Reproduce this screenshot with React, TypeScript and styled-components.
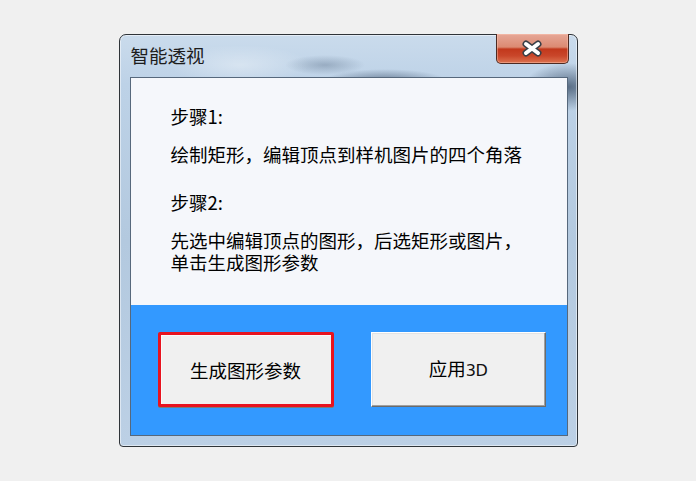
import React from "react";
import styled, { createGlobalStyle } from "styled-components";

const GlobalStyle = createGlobalStyle`
  html, body { margin: 0; padding: 0; background: #f0f0f0; }
  body { font-family: "Noto Sans CJK SC", "Noto Sans", sans-serif; }
`;

const Page = styled.div`
  width: 696px;
  height: 481px;
  display: flex;
  align-items: center;
  justify-content: center;
`;

const Window = styled.div`
  width: 459px;
  height: 413px;
  box-sizing: border-box;
  border: 1px solid #2f3439;
  border-radius: 7px 7px 4px 4px;
  display: flex;
  flex-direction: column;
  box-shadow: inset 0 0 0 1px rgba(255, 255, 255, 0.5);
  background:
    radial-gradient(ellipse 62px 12px at 265px 46px, rgba(75, 95, 120, 0.7), transparent),
    radial-gradient(ellipse 40px 10px at 205px 30px, rgba(90, 110, 135, 0.4), transparent),
    radial-gradient(ellipse 44px 24px at 448px 52px, rgba(55, 75, 100, 0.75), transparent),
    radial-gradient(ellipse 70px 20px at 120px 30px, rgba(255, 255, 255, 0.35), transparent),
    linear-gradient(180deg, #cadbec 0%, #bdd2e7 12%, #b3c9df 50%, #bcd0e5 100%);
`;

const TitleBar = styled.div`
  height: 42px;
  flex: none;
  display: flex;
  justify-content: space-between;
  align-items: flex-start;
  padding: 0 8px 0 11px;
`;

const Title = styled.span`
  margin-top: 8px;
  font-size: 18.5px;
  line-height: 24px;
  color: #1c1c1c;
`;

const CloseButton = styled.div`
  width: 73px;
  height: 30px;
  box-sizing: border-box;
  margin-top: -1px;
  border: 1px solid #4d2a22;
  border-top: none;
  border-radius: 0 0 5px 5px;
  display: flex;
  align-items: center;
  justify-content: center;
  box-shadow: inset 0 0 0 1px rgba(255, 200, 180, 0.45);
  background: linear-gradient(
    180deg,
    #e6a797 0%,
    #dc8a72 45%,
    #c2381c 52%,
    #c9462a 75%,
    #dc7350 100%
  );
`;

const Client = styled.div`
  flex: 1;
  margin: 0 9px 0 10px;
  border: 1px solid #56687c;
  display: flex;
  flex-direction: column;
`;

const BottomFrame = styled.div`
  height: 10px;
  flex: none;
`;

const Panel = styled.div`
  height: 227px;
  flex: none;
  box-sizing: border-box;
  background: #f5f7fb;
  padding: 28px 0 0 40px;
  color: #000;
  font-size: 18.5px;
`;

const Line = styled.p<{ $gap: number; $lh?: number }>`
  margin: 0 0 ${(p) => p.$gap}px 0;
  line-height: ${(p) => p.$lh ?? 21}px;
  white-space: nowrap;
`;

const ButtonArea = styled.div`
  flex: 1;
  background: #3399ff;
  display: flex;
  align-items: flex-start;
  gap: 37px;
  padding: 27px 0 0 27px;
`;

const ActionButton = styled.button<{ $highlight?: boolean; $w: number }>`
  width: ${(p) => p.$w}px;
  height: 75px;
  box-sizing: border-box;
  background: #f0f0f0;
  font-family: "Noto Sans CJK SC", "Noto Sans", sans-serif;
  font-size: 18.5px;
  line-height: 24px;
  color: #000;
  padding: 0;
  text-align: center;
  cursor: default;
  ${(p) =>
    p.$highlight
      ? `
    border: 3px solid #e8131f;
    border-radius: 2px;
    box-shadow: 0 1px 0 #7a7a7a, inset 1px 1px 0 #fafafa;
  `
      : `
    border: 1px solid;
    border-color: #ffffff #6b6b6b #6b6b6b #ffffff;
    box-shadow: inset -1px -1px 0 #a0a0a0, inset 1px 1px 0 #e3e3e3;
  `}
`;

const ThreeD = styled.span`
  font-family: "DejaVu Sans", sans-serif;
  font-size: 16px;
  letter-spacing: -0.5px;
  color: #111;
`;

export default function App() {
  return (
    <>
      <GlobalStyle />
      <Page>
        <Window>
          <TitleBar>
            <Title>智能透视</Title>
            <CloseButton>
              <svg width="22" height="17" viewBox="0 0 22 17">
                <path d="M5 4 L17 13 M17 4 L5 13" stroke="#3a3f47" strokeWidth="7" strokeLinecap="round" />
                <path d="M5 4 L17 13 M17 4 L5 13" stroke="#ffffff" strokeWidth="4" strokeLinecap="round" />
              </svg>
            </CloseButton>
          </TitleBar>
          <Client>
            <Panel>
              <Line $gap={17}>步骤1:</Line>
              <Line $gap={27}>绘制矩形，编辑顶点到样机图片的四个角落</Line>
              <Line $gap={16}>步骤2:</Line>
              <Line $gap={0} $lh={22}>先选中编辑顶点的图形，后选矩形或图片，</Line>
              <Line $gap={0} $lh={22}>单击生成图形参数</Line>
            </Panel>
            <ButtonArea>
              <ActionButton $highlight $w={176}>生成图形参数</ActionButton>
              <ActionButton $w={175}>
                应用<ThreeD>3D</ThreeD>
              </ActionButton>
            </ButtonArea>
          </Client>
          <BottomFrame />
        </Window>
      </Page>
    </>
  );
}
